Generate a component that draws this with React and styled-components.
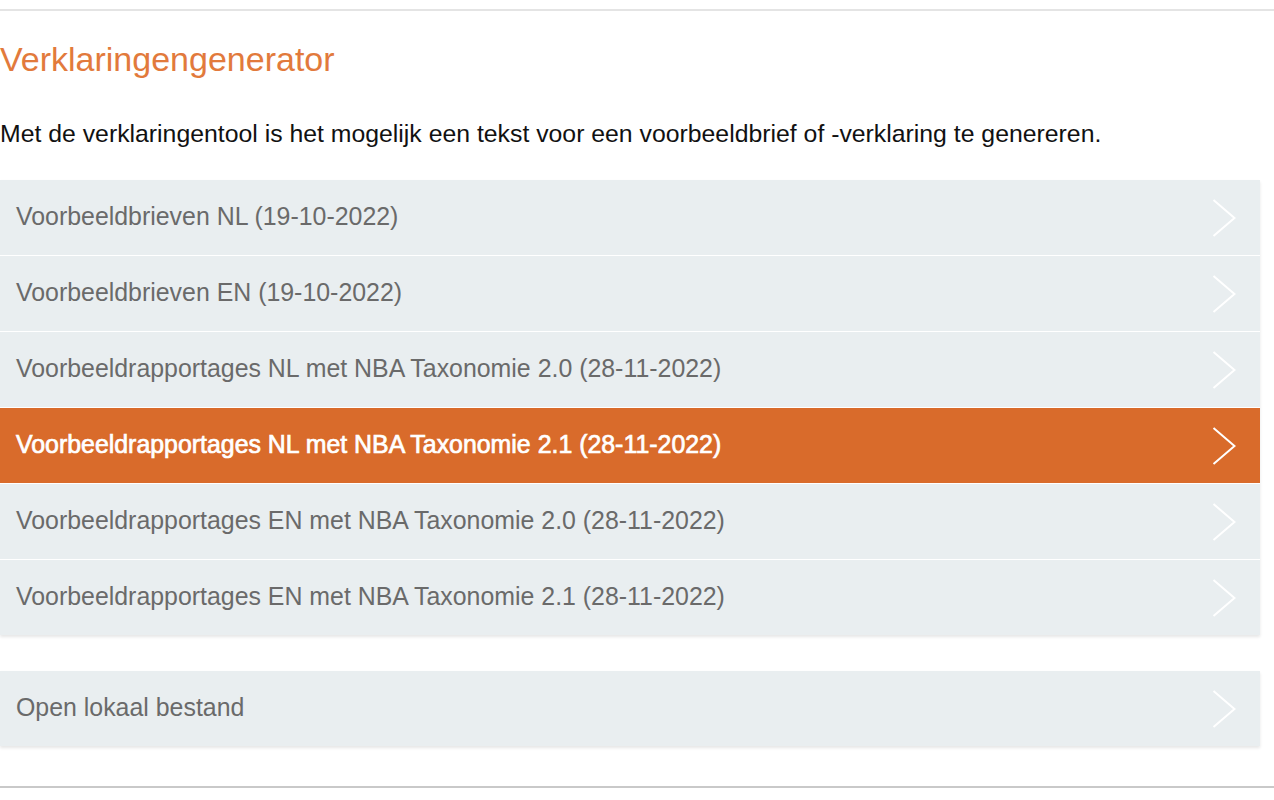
import React from 'react';
import styled, { createGlobalStyle } from 'styled-components';

const GlobalStyle = createGlobalStyle`
    body {
        margin: 0;
        background: #ffffff;
        font-family: "Liberation Sans", Arial, sans-serif;
    }
`;

const Page = styled.div`
    margin-top: 9px;
    height: 775px;
    border-top: 2px solid #e4e4e4;
    border-bottom: 2px solid #c9c9c9;
    box-shadow: 0 2px 2px rgba(0, 0, 0, 0.06);
    padding-right: 14px;
    display: flex;
    flex-direction: column;
`;

const Title = styled.h1`
    margin: 29px 0 0 0;
    font-size: 34px;
    line-height: 38px;
    font-weight: normal;
    color: #e27a3c;
`;

const Intro = styled.p`
    margin: 42px 0 0 0;
    font-size: 24.8px;
    line-height: 28px;
    color: #111111;
`;

const List = styled.ul`
    list-style: none;
    margin: ${(p) => p.$top}px 0 0 0;
    padding: 0;
    display: flex;
    flex-direction: column;
    gap: 1px;
    box-shadow: 0 2px 3px rgba(0, 0, 0, 0.1);
`;

const Row = styled.li`
    height: 75px;
    display: flex;
    align-items: center;
    justify-content: space-between;
    padding: 0 24px 4px 16px;
    box-sizing: border-box;
    background: ${(p) => (p.$active ? '#d96b2b' : '#e9eef0')};
    color: ${(p) => (p.$active ? '#ffffff' : '#6a6a6a')};
    font-size: 24.9px;
    line-height: 28px;
    -webkit-text-stroke: ${(p) => (p.$active ? '0.7px #ffffff' : '0')};
    cursor: pointer;
`;

const Chevron = styled.svg`
    width: 24px;
    height: 38px;
    margin-bottom: -4px;
    flex-shrink: 0;
`;

const Arrow = () => (
    <Chevron viewBox="0 0 24 38">
        <polyline points="1.5,1 22.5,19 1.5,37" fill="none" stroke="#ffffff" strokeWidth="2" />
    </Chevron>
);

const items = [
    'Voorbeeldbrieven NL (19-10-2022)',
    'Voorbeeldbrieven EN (19-10-2022)',
    'Voorbeeldrapportages NL met NBA Taxonomie 2.0 (28-11-2022)',
    'Voorbeeldrapportages NL met NBA Taxonomie 2.1 (28-11-2022)',
    'Voorbeeldrapportages EN met NBA Taxonomie 2.0 (28-11-2022)',
    'Voorbeeldrapportages EN met NBA Taxonomie 2.1 (28-11-2022)',
];

const App = () => {
    return (
        <>
            <GlobalStyle />
            <Page>
                <Title>Verklaringengenerator</Title>
                <Intro>
                    Met de verklaringentool is het mogelijk een tekst voor een voorbeeldbrief of -verklaring te genereren.
                </Intro>
                <List $top={32}>
                    {items.map((label, i) => (
                        <Row key={label} $active={i === 3}>
                            <span>{label}</span>
                            <Arrow />
                        </Row>
                    ))}
                </List>
                <List $top={36}>
                    <Row>
                        <span>Open lokaal bestand</span>
                        <Arrow />
                    </Row>
                </List>
            </Page>
        </>
    );
};

export default App;
